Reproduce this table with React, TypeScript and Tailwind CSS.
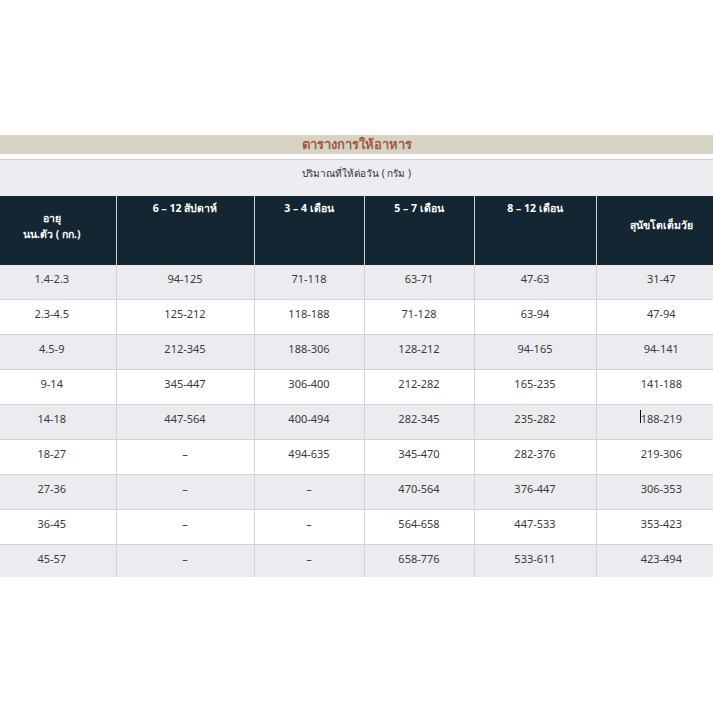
import React from "react";

const rows: string[][] = [
  ["1.4-2.3", "94-125", "71-118", "63-71", "47-63", "31-47"],
  ["2.3-4.5", "125-212", "118-188", "71-128", "63-94", "47-94"],
  ["4.5-9", "212-345", "188-306", "128-212", "94-165", "94-141"],
  ["9-14", "345-447", "306-400", "212-282", "165-235", "141-188"],
  ["14-18", "447-564", "400-494", "282-345", "235-282", "188-219"],
  ["18-27", "–", "494-635", "345-470", "282-376", "219-306"],
  ["27-36", "–", "–", "470-564", "376-447", "306-353"],
  ["36-45", "–", "–", "564-658", "447-533", "353-423"],
  ["45-57", "–", "–", "658-776", "533-611", "423-494"],
];

export default function App() {
  return (
    <div
      className="w-[713px] h-[713px] bg-white pt-[135px]"
      style={{ fontFamily: "Tahoma, 'Noto Sans', 'DejaVu Sans', sans-serif" }}
    >
      <div className="h-[19px] bg-[#d6d3c4] flex items-center justify-center text-[13px] font-bold text-[#a35b40] leading-none">
        ตารางการให้อาหาร
      </div>
      <div className="h-[5px]" />
      <table className="w-[713px] border-collapse table-fixed text-[11px] text-[#333]">
        <colgroup>
          <col className="w-[116px]" />
          <col className="w-[138px]" />
          <col className="w-[110px]" />
          <col className="w-[110px]" />
          <col className="w-[122px]" />
          <col className="w-[117px]" />
        </colgroup>
        <tbody>
          <tr className="h-[36px] bg-[#ececf1] border-t border-[#d2d2d8]">
            <td colSpan={6} className="text-center align-middle pb-[8px] text-[10px]">
              ปริมาณที่ให้ต่อวัน ( กรัม )
            </td>
          </tr>
          <tr className="h-[69px] bg-[#132631] text-white font-bold text-[10.5px]">
            <td className="text-center align-middle leading-[16px] pb-[8px] pr-[12px] border-r border-[#c9d0d6]">
              อายุ
              <br />
              นน.ตัว ( กก.)
            </td>
            <td className="text-center align-top pt-[5px] border-r border-[#c9d0d6]">6 – 12 สัปดาห์</td>
            <td className="text-center align-top pt-[5px] border-r border-[#c9d0d6]">3 – 4 เดือน</td>
            <td className="text-center align-top pt-[5px] border-r border-[#c9d0d6]">5 – 7 เดือน</td>
            <td className="text-center align-top pt-[5px] border-r border-[#c9d0d6]">8 – 12 เดือน</td>
            <td className="text-center align-middle pb-[8px] pl-[13px]">สุนัขโตเต็มวัย</td>
          </tr>
          {rows.map((r, i) => {
            const last = i === rows.length - 1;
            return (
              <tr
                key={i}
                className={
                  (last ? "h-[32px] " : "h-[35px] border-b border-[#d4d4d8] ") +
                  (i % 2 === 0 ? "bg-[#ececf0]" : "bg-white")
                }
              >
                {r.map((c, j) => (
                  <td
                    key={j}
                    className={
                      "text-center align-middle text-[#3a3a3a] " +
                      (last ? "pb-[4px] " : "pb-[6px] ") +
                      (j === 0 ? "pr-[12px] " : "") +
                      (j === 5 ? "pl-[13px] " : "") +
                      (j < 5 ? "border-r border-[#d4d4d8]" : "")
                    }
                  >
                    {i === 4 && j === 5 ? (
                      <span className="relative">
                        <span className="absolute left-[-1px] top-[-1px] w-[1px] h-[13px] bg-black" />
                        {c}
                      </span>
                    ) : (
                      c
                    )}
                  </td>
                ))}
              </tr>
            );
          })}
        </tbody>
      </table>
    </div>
  );
}
